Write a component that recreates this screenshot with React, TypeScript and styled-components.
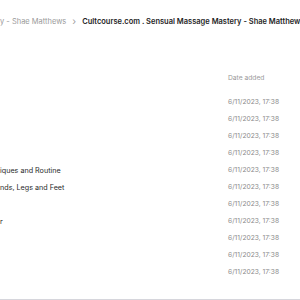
import React from 'react';
import styled, {createGlobalStyle} from "styled-components";

const GlobalStyle = createGlobalStyle`
    html, body {
        margin: 0;
        padding: 0;
        background: #ffffff;
        overflow: hidden;
    }
    body {
        font-family: Inter, "Liberation Sans", sans-serif;
    }
`

type RowType = {
    name: string
    date: string
}

const rows: RowType[] = [
    {name: "", date: "6/11/2023, 17:38"},
    {name: "", date: "6/11/2023, 17:38"},
    {name: "", date: "6/11/2023, 17:38"},
    {name: "", date: "6/11/2023, 17:38"},
    {name: "iques and Routine", date: "6/11/2023, 17:38"},
    {name: "nds, Legs and Feet", date: "6/11/2023, 17:38"},
    {name: "", date: "6/11/2023, 17:38"},
    {name: "r", date: "6/11/2023, 17:38"},
    {name: "", date: "6/11/2023, 17:38"},
    {name: "", date: "6/11/2023, 17:38"},
    {name: "", date: "6/11/2023, 17:38"},
]

const App = () => {
    return (
        <Page>
            <GlobalStyle/>
            <Breadcrumb>
                <Crumb>y - Shae Matthews</Crumb>
                <Chevron>›</Chevron>
                <Current>Cultcourse.com . Sensual Massage Mastery - Shae Matthews</Current>
            </Breadcrumb>
            <Table>
                <HeaderRow>
                    <NameCell/>
                    <HeaderCell>Date added</HeaderCell>
                </HeaderRow>
                {rows.map((r, i) => (
                    <Row key={i}>
                        <NameCell>{r.name}</NameCell>
                        <DateCell>{r.date}</DateCell>
                    </Row>
                ))}
            </Table>
            <BottomLine/>
        </Page>
    );
};

export default App;

const Page = styled.div`
    width: 300px;
    height: 300px;
    display: flex;
    flex-direction: column;
    overflow: hidden;
`
const Breadcrumb = styled.div`
    display: flex;
    align-items: center;
    gap: 6px;
    height: 14px;
    margin-top: 14px;
    font-size: 7.5px;
    white-space: nowrap;
    overflow: hidden;
`
const Crumb = styled.span`
    color: #9a9a9a;
`
const Chevron = styled.span`
    color: #a0a0a0;
    font-size: 10px;
    line-height: 1;
`
const Current = styled.span`
    color: #1e1e1e;
    font-weight: 600;
`
const Table = styled.div`
    display: flex;
    flex-direction: column;
    margin-top: 41.5px;
    flex: 1;
`
const HeaderRow = styled.div`
    display: grid;
    grid-template-columns: 228px 72px;
    height: 17px;
    align-items: center;
    margin-bottom: 7px;
    font-size: 6.7px;
`
const Row = styled.div`
    display: grid;
    grid-template-columns: 228px 72px;
    height: 17px;
    align-items: center;
    font-size: 6.7px;
`
const NameCell = styled.div`
    color: #2a2a2a;
    white-space: nowrap;
    font-size: 7.2px;
`
const HeaderCell = styled.div`
    color: #9a9a9a;
`
const DateCell = styled.div`
    color: #8a8a8a;
`
const BottomLine = styled.div`
    height: 1px;
    background: #d6d6dc;
`
